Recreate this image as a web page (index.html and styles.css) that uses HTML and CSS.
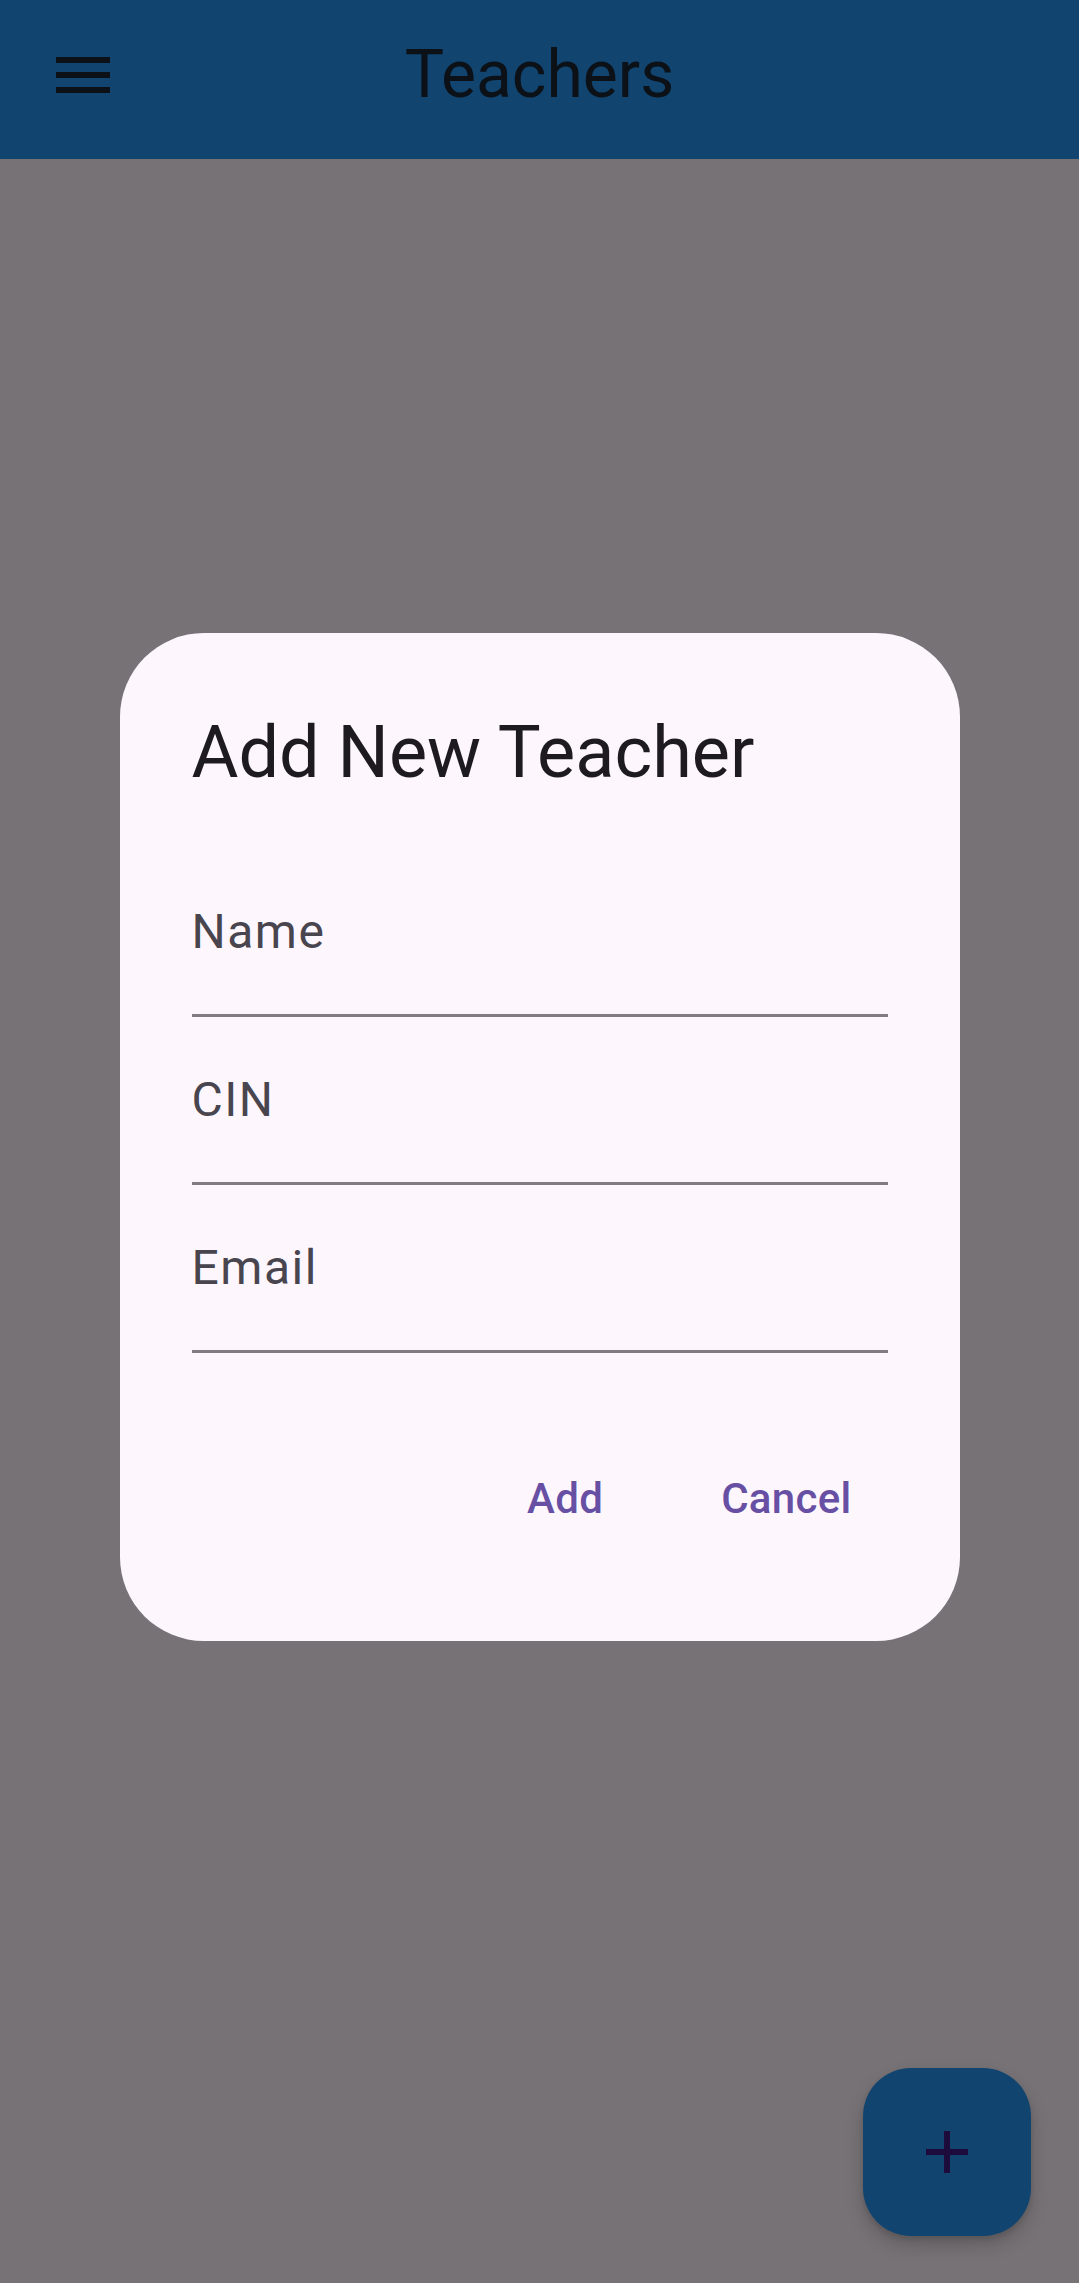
FILE: index.html
```html
<!DOCTYPE html>
<html lang="en">
<head>
<meta charset="utf-8">
<title>Teachers</title>
<link rel="stylesheet" href="styles.css">
</head>
<body>
  <header class="app-bar">
    <div class="toolbar">
      <button class="icon-btn" aria-label="Menu">
        <svg class="menu-icon" viewBox="0 0 24 24" width="72" height="72"><path d="M3 18h18v-2H3v2zm0-5h18v-2H3v2zm0-7v2h18V6H3z"/></svg>
      </button>
      <h1 class="app-title">Teachers</h1>
      <div class="spacer"></div>
    </div>
  </header>
  <main class="content"></main>

  <button class="fab" aria-label="Add teacher">
    <svg viewBox="0 0 24 24" width="72" height="72"><path d="M19 13h-6v6h-2v-6H5v-2h6V5h2v6h6v2z"/></svg>
  </button>

  <div class="scrim">
    <div class="dialog" role="dialog">
      <h2 class="dialog-title">Add New Teacher</h2>
      <div class="fields">
        <div class="field"><span class="field-label">Name</span></div>
        <div class="field"><span class="field-label">CIN</span></div>
        <div class="field"><span class="field-label">Email</span></div>
      </div>
      <div class="actions">
        <button class="text-btn">Add</button>
        <button class="text-btn">Cancel</button>
      </div>
    </div>
  </div>
</body>
</html>
```

FILE: styles.css
```css
* { box-sizing: border-box; }

html, body {
  margin: 0;
  padding: 0;
}

body {
  width: 1079px;
  height: 2283px;
  overflow: hidden;
  background: #767276;
  font-family: Roboto, "Noto Sans", sans-serif;
}

.app-bar {
  height: 159px;
  background: #11446f;
  padding-bottom: 10px;
}

.toolbar {
  height: 149px;
  display: grid;
  grid-template-columns: 1fr auto 1fr;
  align-items: center;
}

.icon-btn {
  width: 72px;
  height: 72px;
  margin-left: 47px;
  padding: 0;
  border: none;
  background: transparent;
  display: flex;
}

.menu-icon {
  fill: #0c1118;
}

.app-title {
  margin: 0;
  font-size: 66px;
  font-weight: 400;
  line-height: 84px;
  color: #0c1118;
}

.content {
  height: 2124px;
}

.fab {
  position: fixed;
  right: 48px;
  bottom: 47px;
  width: 168px;
  height: 168px;
  border: none;
  border-radius: 48px;
  background: #11446f;
  box-shadow: 0 9px 18px rgba(0, 0, 0, 0.18), 0 3px 6px rgba(0, 0, 0, 0.12);
  display: flex;
  align-items: center;
  justify-content: center;
  padding: 0;
}

.fab svg {
  fill: #1c0b3b;
}

.scrim {
  position: fixed;
  inset: 0;
  display: flex;
  justify-content: center;
  align-items: flex-start;
  padding-top: 633px;
}

.dialog {
  width: 840px;
  background: #fdf7fd;
  border-radius: 84px;
  padding: 72px;
}

.dialog-title {
  margin: 0 0 48px;
  font-size: 72px;
  font-weight: 400;
  line-height: 96px;
  color: #1d1b20;
}

.field {
  height: 168px;
  border-bottom: 3px solid #817c84;
  display: flex;
  align-items: center;
}

.field-label {
  font-size: 48px;
  line-height: 72px;
  letter-spacing: 1.5px;
  color: #49454f;
}

.actions {
  margin-top: 72px;
  display: flex;
  justify-content: flex-end;
  gap: 24px;
}

.text-btn {
  height: 144px;
  min-width: 192px;
  padding: 3px 36px 0;
  border: none;
  background: transparent;
  font-family: Roboto, "Noto Sans", sans-serif;
  font-size: 42px;
  font-weight: 500;
  line-height: 60px;
  letter-spacing: 0.3px;
  color: #6750a4;
}
```
